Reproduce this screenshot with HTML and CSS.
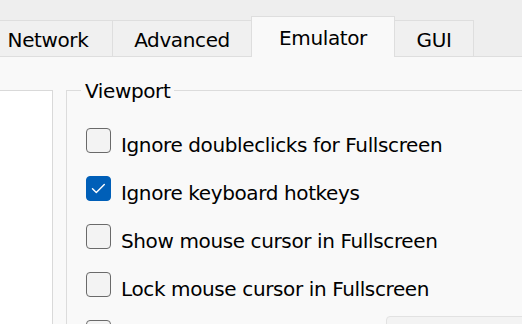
FILE: index.html
```html
<!DOCTYPE html>
<html>
<head>
<meta charset="utf-8">
<link rel="stylesheet" href="styles.css">
</head>
<body>
<div class="tabbar">
  <div class="tab tab-network">Network</div>
  <div class="tab tab-advanced">Advanced</div>
  <div class="tab tab-emulator selected">Emulator</div>
  <div class="tab tab-gui">GUI</div>
</div>
<div class="page">
  <div class="listbox"></div>
  <fieldset class="group">
    <legend class="legend">Viewport</legend>
    <div class="row">
      <span class="check"></span>
      <span class="label">Ignore doubleclicks for Fullscreen</span>
    </div>
    <div class="row">
      <span class="check checked"><svg viewBox="0 0 25 25" width="25" height="25"><path d="M6.5 12.8 L10.3 16.5 L18.3 8.5" fill="none" stroke="#fff" stroke-width="1.4" stroke-linecap="round" stroke-linejoin="round"/></svg></span>
      <span class="label">Ignore keyboard hotkeys</span>
    </div>
    <div class="row">
      <span class="check"></span>
      <span class="label">Show mouse cursor in Fullscreen</span>
    </div>
    <div class="row">
      <span class="check"></span>
      <span class="label">Lock mouse cursor in Fullscreen</span>
    </div>
    <div class="row">
      <span class="check"></span>
      <span class="label"></span>
      <span class="combo"></span>
    </div>
  </fieldset>
</div>
</body>
</html>
```
FILE: styles.css
```css
html, body {
  margin: 0;
  padding: 0;
}
body {
  width: 522px;
  height: 324px;
  overflow: hidden;
  background: #f9f9f9;
  font-family: "DejaVu Sans", "Liberation Sans", sans-serif;
  font-size: 20px;
  letter-spacing: -0.38px;
  color: #000;
}
.tabbar {
  display: flex;
  align-items: flex-end;
  height: 56px;
  border-bottom: 1px solid #dedede;
  background: #eeeeee;
  margin-left: -16px;
}
.tab {
  box-sizing: border-box;
  height: 36px;
  padding-top: 8px;
  line-height: 22px;
  text-align: center;
  background: #f0f0f0;
  border-top: 1px solid #dedede;
  border-right: 1px solid #dedede;
  white-space: nowrap;
}
.tab-network { width: 129px; }
.tab-advanced { width: 139px; }
.tab-emulator { width: 144px; }
.tab-gui { width: 79px; }
.tab.selected {
  height: 41px;
  padding-top: 10px;
  margin-left: -1px;
  margin-bottom: -1px;
  background: #f9f9f9;
  border-left: 1px solid #dedede;
  position: relative;
}
.page {
  display: flex;
  align-items: flex-start;
  gap: 13px;
  padding-top: 21px;
}
.listbox {
  box-sizing: border-box;
  flex: 0 0 53px;
  height: 300px;
  margin-top: 12px;
  background: #ffffff;
  border-top: 1px solid #d9d9d9;
  border-right: 1px solid #d9d9d9;
}
.group {
  flex: 0 0 600px;
  margin: 0;
  padding: 14px 0 0 14px;
  border: 1px solid #dcdcdc;
  min-width: 0;
}
.legend {
  padding: 2px 4px 0;
  line-height: 22px;
}
.row {
  display: flex;
  align-items: flex-start;
  height: 48px;
  margin-left: 5px;
}
.check {
  box-sizing: border-box;
  flex: 0 0 25px;
  width: 25px;
  height: 25px;
  margin-top: 12px;
  border: 1px solid #6a6a6a;
  border-radius: 4px;
  background: #f3f3f3;
}
.check svg {
  display: block;
  margin: -1px;
}
.check.checked {
  background: #005fb8;
  border-color: #005fb8;
}
.label {
  margin-left: 10px;
  margin-top: 18px;
  line-height: 22px;
  white-space: nowrap;
}
.combo {
  box-sizing: border-box;
  width: 200px;
  height: 32px;
  margin-top: 8px;
  margin-left: 265px;
  border: 1px solid #e2e2e2;
  border-radius: 4px;
  background: #f3f3f3;
}
```
